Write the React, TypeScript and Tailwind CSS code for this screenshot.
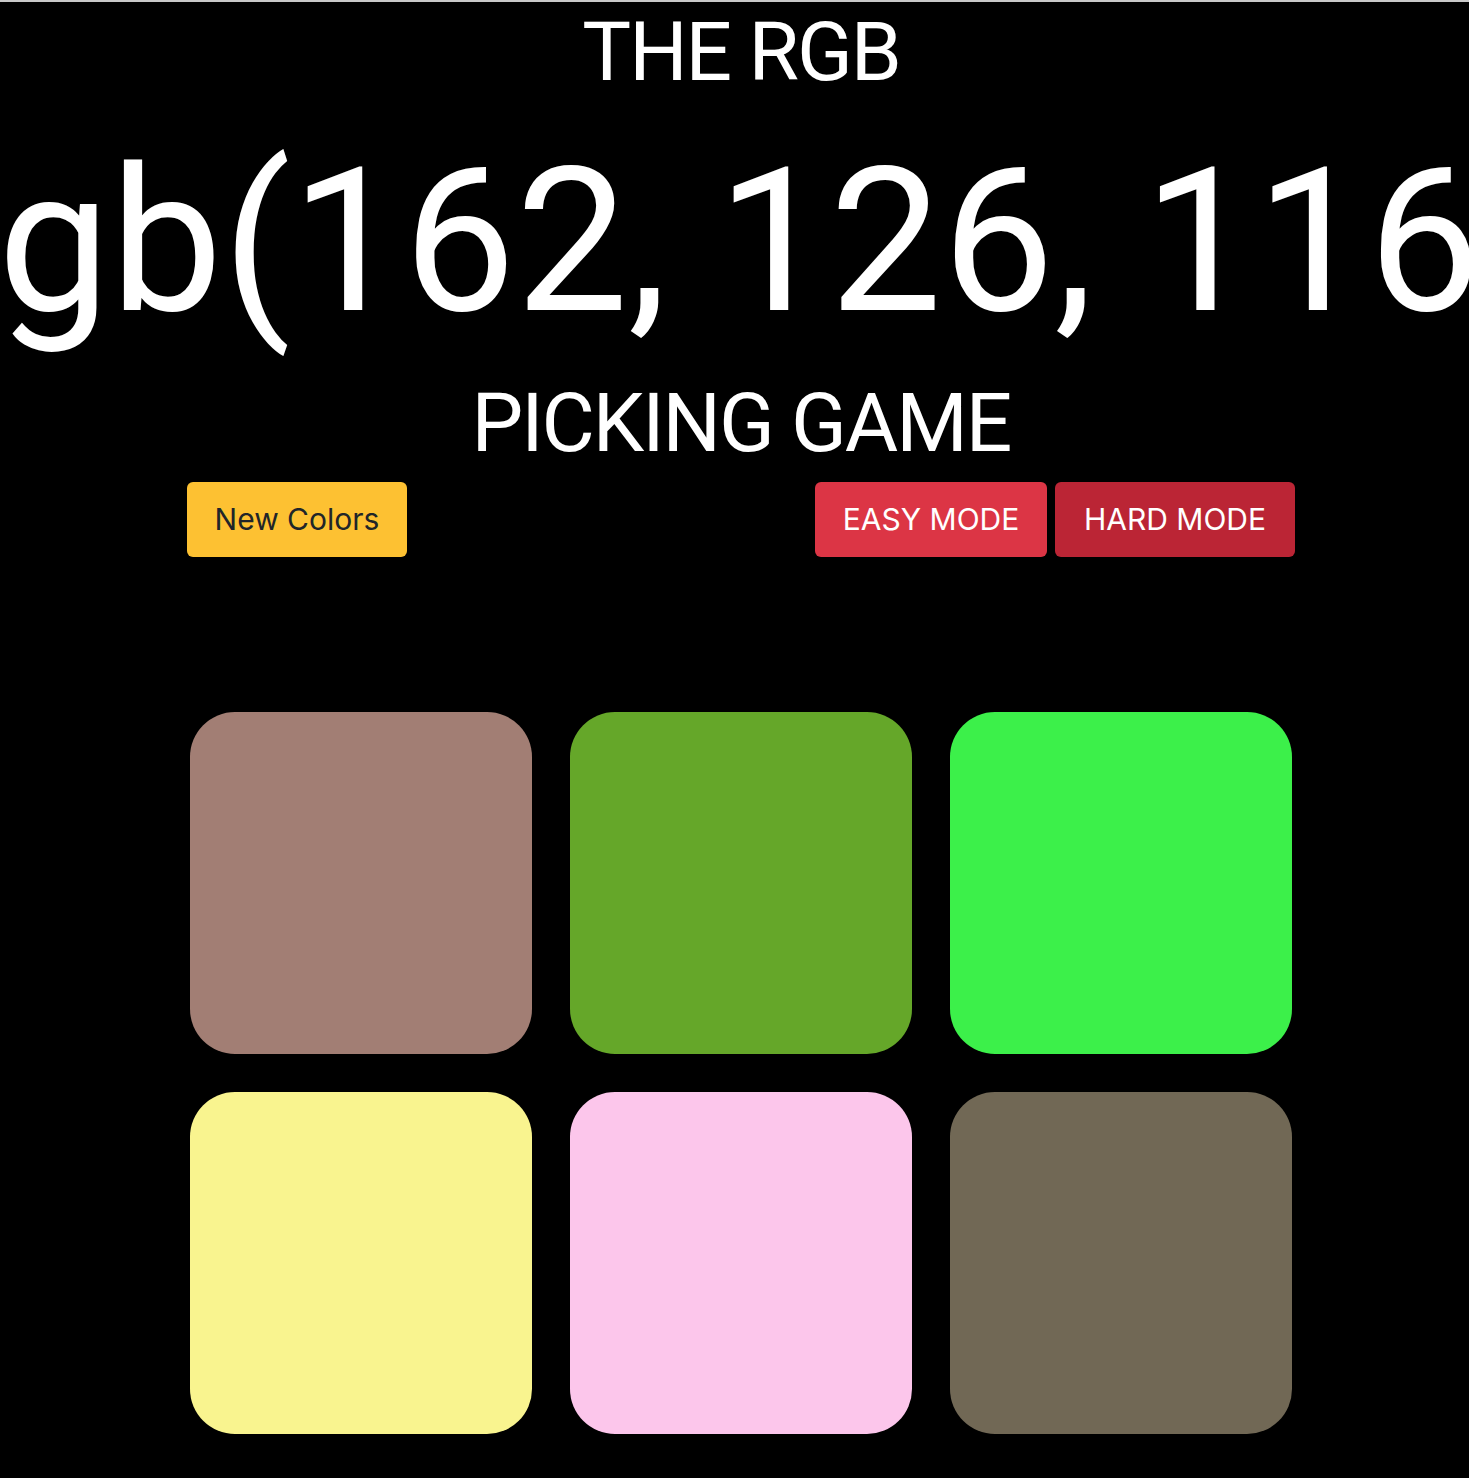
import { useState } from 'react'

const COLORS = [
  'rgb(162, 126, 116)',
  'rgb(101, 167, 41)',
  'rgb(60, 240, 74)',
  'rgb(249, 244, 143)',
  'rgb(252, 198, 235)',
  'rgb(113, 104, 85)',
]

export default function App() {
  const [hard, setHard] = useState(true)
  const picked = COLORS[0]

  return (
    <div className="min-h-screen overflow-hidden bg-black border-t-2 border-[#c9c9c9]">
      <div className="w-[1482px] flex flex-col items-center text-white" style={{ fontFamily: 'Roboto, "Liberation Sans", sans-serif' }}>
        {/* Title */}
        <h1 className="mt-[9px] text-[82px] leading-none tracking-[-0.025em]">THE RGB</h1>
        <div className="mt-[49px] w-full flex justify-center">
          <span className="whitespace-nowrap text-[200px] leading-none">{picked}</span>
        </div>
        <h1 className="mt-[40px] text-[82px] leading-none tracking-[-0.025em]">PICKING GAME</h1>

        {/* Controls */}
        <div
          className="mt-[18px] w-[1108px] flex items-center justify-between"
          style={{ fontFamily: 'Inter, "Liberation Sans", sans-serif' }}
        >
          <button className="w-[220px] h-[75px] rounded-[6px] bg-[#fdc132] text-[#212529] text-[30px] flex items-center justify-center">
            New Colors
          </button>
          <div className="flex gap-2">
            <button
              onClick={() => setHard(false)}
              className="w-[232px] h-[75px] rounded-[6px] bg-[#dc3545] text-white text-[30px] flex items-center justify-center"
            >
              EASY MODE
            </button>
            <button
              onClick={() => setHard(true)}
              className={`w-[240px] h-[75px] rounded-[6px] text-white text-[30px] flex items-center justify-center ${hard ? 'bg-[#bb2535]' : 'bg-[#dc3545]'}`}
            >
              HARD MODE
            </button>
          </div>
        </div>

        {/* Squares */}
        <div className="mt-[155px] grid grid-cols-3 gap-[38px]">
          {(hard ? COLORS : COLORS.slice(0, 3)).map((c) => (
            <div key={c} className="w-[342px] h-[342px] rounded-[45px]" style={{ backgroundColor: c }} />
          ))}
        </div>
      </div>
    </div>
  )
}
